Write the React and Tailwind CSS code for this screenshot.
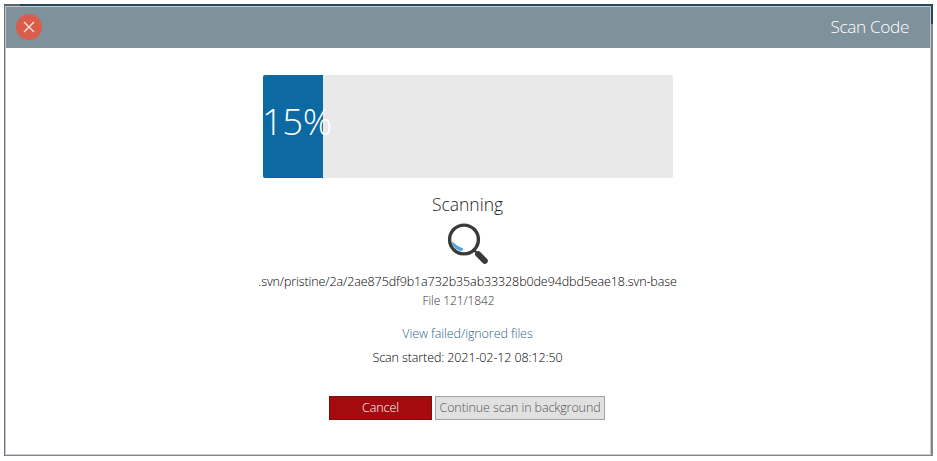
const PROGRESS = 15;

function CloseButton() {
  return (
    <button aria-label="Close" className="mb-0.5 flex h-[26px] w-[26px] items-center justify-center rounded-full bg-[#d95d4b]">
      <svg width="12" height="12" viewBox="0 0 12 12" fill="none" stroke="#f6e4e1" strokeWidth="1.4">
        <path d="M1 1 11 11M11 1 1 11" />
      </svg>
    </button>
  );
}

function Magnifier() {
  return (
    <svg width="42" height="44" viewBox="0 0 42 44" fill="none" className="block">
      <circle cx="17" cy="17.5" r="14.4" stroke="#3a3a3a" strokeWidth="3.4" />
      <path d="M6 20.3C8.5 23.4 11.5 25.4 15.6 26.6L15 28.4C10.6 28.6 6.4 25.4 5.6 20.6Z" fill="#4da6dc" stroke="#4da6dc" strokeWidth="1" />
      <path d="M27 28 31 32" stroke="#3a3a3a" strokeWidth="2.4" />
      <path d="M31.2 32.2 37.8 38.8" stroke="#3a3a3a" strokeWidth="6" strokeLinecap="round" />
    </svg>
  );
}

export default function App() {
  return (
    <div className="h-[461px] w-[937px] bg-white pt-1 pl-1 font-['Open_Sans',sans-serif] font-light">
      <div className="flex h-[452px] w-[929px] flex-col bg-[#858589]">
        <div className="flex h-0.5 shrink-0">
          <div className="w-4 bg-[#5d6468]" />
          <div className="flex-1 bg-[#23495a]" />
        </div>
        <div className="flex flex-1">
          <div className="w-px bg-[#66757c]" />
          <div className="mb-px flex flex-1 flex-col border border-[#c4c8cb] bg-white">
            <header className="flex h-[41px] shrink-0 items-center justify-between bg-[#7f919b] pr-[21px] pl-[10px]">
              <CloseButton />
              <h1 className="pb-0.5 text-[17.3px] leading-none tracking-[-0.4px] whitespace-nowrap text-white">Scan Code</h1>
            </header>
            <main className="flex flex-col items-center pt-[27px] pr-px whitespace-nowrap">
              <div className="ml-px h-[103px] w-[410px] overflow-hidden rounded-[2px] bg-[#e9e9e9]">
                <div className="h-full bg-[#0d69a1] pt-[21px] text-[36.5px] leading-[50px] text-white" style={{ width: `${PROGRESS - 0.3}%` }}>
                  <span className="-ml-px tracking-[-0.5px]">{PROGRESS}%</span>
                </div>
              </div>
              <h2 className="mt-[13px] h-[26px] text-[17.5px] leading-[26px] text-[#222]">Scanning</h2>
              <div className="mt-[5px]">
                <Magnifier />
              </div>
              <p className="mt-[7px] text-[12.5px] leading-[18px] tracking-[-0.1px] text-black">
                .svn/pristine/2a/2ae875df9b1a732b35ab33328b0de94dbd5eae18.svn-base
              </p>
              <p className="mt-px pr-[18px] text-[12px] leading-[18px] tracking-[-0.1px] text-[#333]">File 121/1842</p>
              <a className="mt-[15px] text-[12.5px] leading-[18px] tracking-[-0.08px] text-[#2e6587]">View failed/ignored files</a>
              <p className="mt-[6px] text-[12.5px] leading-[18px] tracking-[-0.1px] text-black">Scan started: 2021-02-12 08:12:50</p>
              <div className="mt-[29px] mr-px flex gap-[3px] text-[12.5px]">
                <button className="h-6 w-[103px] border border-[#7c1010] bg-[#a50b0e] pt-px leading-none tracking-[-0.1px] text-white">Cancel</button>
                <button className="h-6 w-[170px] border border-[#a3a3a3] bg-[#e1e1e1] pt-px leading-none tracking-[-0.1px] text-[#555]">Continue scan in background</button>
              </div>
            </main>
          </div>
          <div className="w-0.5">
            <div className="h-[18px] bg-[#23495a]" />
          </div>
        </div>
      </div>
    </div>
  );
}
